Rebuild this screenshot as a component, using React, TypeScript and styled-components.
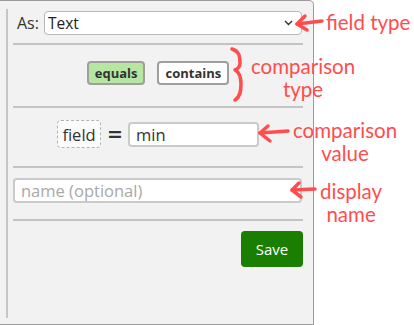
import React from "react";
import styled, { createGlobalStyle } from "styled-components";

const Global = createGlobalStyle`
  html, body { margin: 0; padding: 0; background: #ffffff; }
  body { font-family: "Open Sans", "Noto Sans", sans-serif; color: #333; }
  * { box-sizing: border-box; }
`;

const Page = styled.div`
  position: relative;
  width: 414px;
  height: 325px;
  overflow: hidden;
`;

const Panel = styled.div`
  width: 314px;
  height: 325px;
  background: #f2f2f2;
  border: 1px solid #9c9c9c;
  border-left: none;
  border-top-right-radius: 5px;
  padding: 8px 10px 6px 6px;
`;

const Content = styled.div`
  height: 100%;
  border-left: 2px solid #c6c6c6;
  padding-left: 5px;
  display: flex;
  flex-direction: column;
`;

const Rule = styled.div`
  height: 2px;
  background: #c4c4c4;
  flex-shrink: 0;
`;

const Row = styled.div<{ $top: number; $bottom: number; $justify?: string }>`
  display: flex;
  align-items: center;
  justify-content: ${(p) => p.$justify || "flex-start"};
  padding-top: ${(p) => p.$top}px;
  padding-bottom: ${(p) => p.$bottom}px;
`;

const Label = styled.span`
  font-size: 16px;
  color: #333;
  margin-left: 4px;
  margin-right: 5px;
  line-height: 24px;
`;

const Select = styled.div`
  flex: 1;
  height: 24px;
  margin-right: 1px;
  background: #fff;
  border: 1px solid #b8b8b8;
  border-radius: 4px;
  display: flex;
  align-items: center;
  justify-content: space-between;
  padding: 0 8px 0 3px;
  font-size: 15.5px;
  color: #222;
`;

const ToggleGroup = styled.div`
  display: flex;
  gap: 12px;
`;

const Toggle = styled.div<{ $active?: boolean }>`
  height: 24px;
  padding: 0 6px;
  display: flex;
  align-items: center;
  border: 2px solid #9e9e9e;
  border-radius: 4px;
  background: ${(p) => (p.$active ? "#b6e6a2" : "#ffffff")};
  font-size: 13px;
  font-weight: 700;
  color: #333;
`;

const FieldChip = styled.div`
  height: 28px;
  width: 44px;
  border: 1px dashed #b4b4b4;
  border-radius: 4px;
  background: #fbfbfb;
  display: flex;
  align-items: center;
  justify-content: center;
  font-size: 16.5px;
  color: #333;
`;

const Equals = styled.span`
  font-family: "DejaVu Sans", sans-serif;
  font-size: 19px;
  font-weight: 700;
  color: #333;
  margin: 0 5px 0 6px;
  line-height: 1;
`;

const TextBox = styled.div<{ $width: number; $placeholder?: boolean }>`
  width: ${(p) => p.$width}px;
  height: 25px;
  background: #fff;
  border: 2px solid #cacaca;
  border-radius: 4px;
  display: flex;
  align-items: center;
  padding-left: 6px;
  font-size: 16.5px;
  color: ${(p) => (p.$placeholder ? "#a8a8a8" : "#333")};
`;

const SaveButton = styled.div`
  width: 62px;
  height: 36px;
  background: #1a7f00;
  border-radius: 4px;
  color: #fff;
  font-size: 15px;
  display: flex;
  align-items: center;
  justify-content: center;
`;

const Note = styled.div<{ $x: number; $y: number; $center?: boolean }>`
  position: absolute;
  left: ${(p) => p.$x}px;
  top: ${(p) => p.$y}px;
  font-family: "Lato", "Open Sans", sans-serif;
  font-size: 20.5px;
  line-height: 23px;
  color: #ff4d4d;
  white-space: nowrap;
  text-align: ${(p) => (p.$center ? "center" : "left")};
`;

const Overlay = styled.svg`
  position: absolute;
  left: 0;
  top: 0;
  pointer-events: none;
`;

export default function App() {
  return (
    <>
      <Global />
      <Page>
        <Panel>
          <Content>
            <Row $top={2} $bottom={8}>
              <Label>As:</Label>
              <Select>
                <span>Text</span>
                <svg width="9" height="6" viewBox="0 0 9 6">
                  <path d="M1 1 L4.5 4.5 L8 1" stroke="#333" strokeWidth="1.4" fill="none" />
                </svg>
              </Select>
            </Row>
            <Rule />
            <Row $top={16} $bottom={21} $justify="center">
              <ToggleGroup>
                <Toggle $active>equals</Toggle>
                <Toggle>contains</Toggle>
              </ToggleGroup>
            </Row>
            <Rule />
            <Row $top={12} $bottom={18} $justify="center">
              <FieldChip>field</FieldChip>
              <Equals>=</Equals>
              <TextBox $width={131}>min</TextBox>
            </Row>
            <Rule />
            <Row $top={10} $bottom={16}>
              <TextBox $width={289} $placeholder>
                name (optional)
              </TextBox>
            </Row>
            <Rule />
            <Row $top={10} $bottom={0} $justify="flex-end">
              <SaveButton>Save</SaveButton>
            </Row>
          </Content>
        </Panel>

        <Overlay width="414" height="325" viewBox="0 0 414 325">
          <g stroke="#ff4d4d" strokeWidth="3.5" fill="none" strokeLinecap="round" strokeLinejoin="round">
            <path d="M297 24 L322 21" />
            <path d="M305 16 L297 24 L307 30" />
            <path d="M232 49 C239 51 240 56 240 63 C240 67 238 69 235 70 C239 72 241 76 241 84 C241 92 240 97 235 100" />
            <path d="M260 133 L288 131" />
            <path d="M268 126 L260 133 L270 141" />
            <path d="M292 190 L315 189" />
            <path d="M299 183 L292 190 L301 197" />
          </g>
        </Overlay>

        <Note $x={326} $y={11}>field type</Note>
        <Note $x={251} $y={55} $center>
          comparison
          <br />
          type
        </Note>
        <Note $x={293} $y={119} $center>
          comparison
          <br />
          value
        </Note>
        <Note $x={320} $y={180} $center>
          display
          <br />
          name
        </Note>
      </Page>
    </>
  );
}
